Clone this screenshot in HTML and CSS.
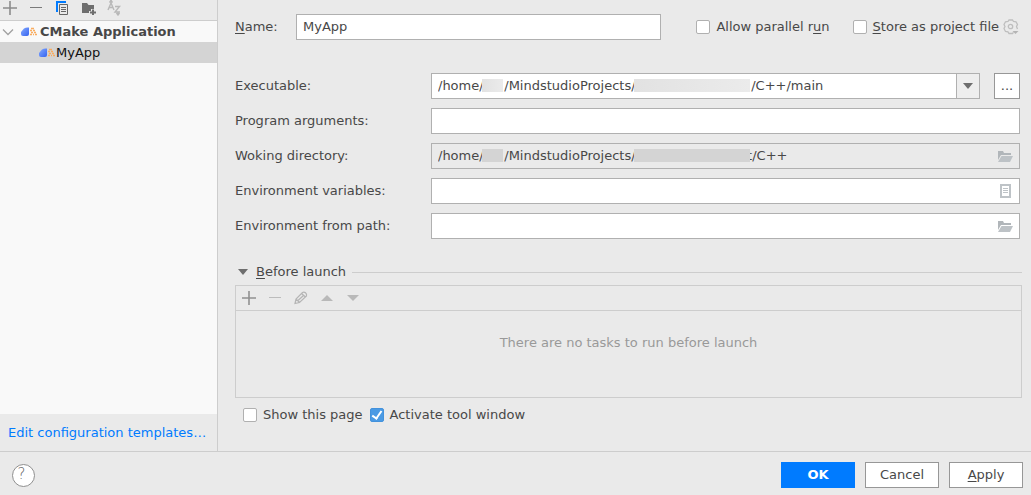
FILE: index.html
```html
<!DOCTYPE html>
<html lang="en">
  <head>
    <meta charset="utf-8">
    <title>Run/Debug Configurations</title>
    <link rel="stylesheet" href="styles.css">
  </head>
  <body>
    <div class="main">
      <aside class="sidebar">
        <div class="toolbar">
          <button class="icon-button" aria-label="Add">
            <svg width="16" height="16"><path d="M1 8h14M8 1v14" stroke="#8c8c8c" stroke-width="1.6" fill="none"/></svg>
          </button>
          <button class="icon-button" aria-label="Remove">
            <svg width="16" height="16"><path d="M2 7.5h12" stroke="#7a7a7a" fill="none"/></svg>
          </button>
          <button class="icon-button" aria-label="Copy">
            <svg width="16" height="16"><path d="M3 12V2h9" stroke="#007bff" stroke-width="2" fill="none"/><path d="M5.5 4.5h8v10h-8z" stroke="#666" fill="none"/><path d="M7 7.5h5M7 9.5h5M7 11.5h5" stroke="#666"/></svg>
          </button>
          <button class="icon-button" aria-label="New folder">
            <svg width="16" height="16"><path d="M2 3h5l1.500 2H14v4h-3v2H9v2H2z" fill="#6e6e6e"/><path d="M13 9.500v5.500M10 12.500h6" stroke="#6e6e6e" stroke-width="2"/></svg>
          </button>
          <button class="icon-button" aria-label="Sort">
            <svg width="16" height="16" fill="none" stroke="#b8b8b8" stroke-width="1.400"><path d="M2 10l3-7 3 7M3 7.500h4M9 6.500h4.500L9 12h5M5 0v3M12 12v3"/><path d="M3.500 2.500L5 .500l1.500 2M10.500 13l1.500 2 1.500-2" fill="#b8b8b8"/></svg>
          </button>
        </div>
        <div class="tree">
          <div class="tree-row group">
            <svg class="chevron" width="12" height="12"><path d="M1 3.500l5 5 5-5" stroke="#a0a0a0" stroke-width="1.300" fill="none"/></svg>
            <svg class="app-icon" width="16" height="12"><use href="#app"/></svg>
            <span>CMake Application</span>
          </div>
          <div class="tree-row child selected">
            <svg class="app-icon" width="16" height="12"><use href="#app"/></svg>
            <span>MyApp</span>
          </div>
        </div>
        <div class="templates"><a href="#">Edit configuration templates…</a></div>
      </aside>

      <main class="content">
        <div class="name-row">
          <label class="name-label" for="name"><u>N</u>ame:</label>
          <input class="text name-input" id="name" type="text" value="MyApp">
          <div class="name-options">
            <label class="check"><input type="checkbox"><span>Allow parallel r<u>u</u>n</span></label>
            <div class="store">
              <label class="check"><input type="checkbox"><span><u>S</u>tore as project file</span></label>
              <button class="icon-button" aria-label="Storage options">
                <svg width="16" height="16" fill="none" stroke="#bebebe" stroke-width="1.300"><path d="M10.500 13.300L9.500 14.500H6L5 12.800l-2.500-.3L1 9.500 2 7.500l-1-2 1.500-2.700L5 2.500 6 1h3.500l1 1.500 2.500.3 1.500 2.700-1 2 1 2.500"/><circle cx="7.500" cy="7.500" r="2.200"/><path d="M9.500 12h6l-3 3z" fill="#b4b4b4" stroke="none"/></svg>
              </button>
            </div>
          </div>
        </div>

        <div class="form">
          <div class="row">
            <label for="executable">Executable:</label>
            <div class="combo-row">
              <div class="combo field">
                <input class="text" id="executable" type="text" role="combobox" aria-expanded="false" value="/home/     /MindstudioProjects/                            /C++/main">
                <button class="combo-arrow" aria-label="Show list"><svg width="10" height="6"><path d="M0 0h10L5 6z" fill="#6e6e6e"/></svg></button>
                <span class="mask mask-user"></span>
                <span class="mask mask-project"></span>
              </div>
              <button class="browse" aria-label="Browse">...</button>
            </div>
          </div>
          <div class="row">
            <label for="arguments">Program arguments:</label>
            <div class="field"><input class="text" id="arguments" type="text"></div>
          </div>
          <div class="row">
            <label for="directory">Woking directory:</label>
            <div class="field muted">
              <input class="text" id="directory" type="text" readonly value="/home/     /MindstudioProjects/                           t/C++">
              <span class="mask mask-user"></span>
              <span class="mask mask-project"></span>
              <button class="icon-button field-icon" aria-label="Choose directory"><svg width="16" height="16"><use href="#folder"/></svg></button>
            </div>
          </div>
          <div class="row">
            <label for="variables">Environment variables:</label>
            <div class="field">
              <input class="text" id="variables" type="text">
              <button class="icon-button field-icon" aria-label="Edit variables"><svg width="16" height="16" fill="none" stroke="#bec3c7"><path d="M4 2h9v12H4z" stroke-width="2"/><path d="M6 5.500h5M6 7.500h5M6 9.500h5"/></svg></button>
            </div>
          </div>
          <div class="row">
            <label for="envpath">Environment from path:</label>
            <div class="field">
              <input class="text" id="envpath" type="text">
              <button class="icon-button field-icon" aria-label="Choose file"><svg width="16" height="16"><use href="#folder"/></svg></button>
            </div>
          </div>
        </div>

        <section class="before">
          <h2 class="before-title">
            <svg width="10" height="6"><path d="M0 0h10L5 6z" fill="#6e6e6e"/></svg>
            <span><u>B</u>efore launch</span>
          </h2>
          <div class="tasks">
            <div class="task-toolbar">
              <button class="icon-button" aria-label="Add task"><svg width="16" height="16"><path d="M1 8h14M8 1v14" stroke="#919191" stroke-width="1.600"/></svg></button>
              <button class="icon-button" aria-label="Remove task" disabled><svg width="16" height="16"><path d="M2 7.500h12" stroke="#bcbcbc"/></svg></button>
              <button class="icon-button" aria-label="Edit task" disabled><svg width="16" height="16" fill="none" stroke="#b5b5b5" stroke-width="1.200"><path d="M2 13.500l1-4.500L9.500 2.500q1.500-1 3 .300t1 3.200L6.500 12.500zM3 9l3.500 3.500M8.500 3.500l4 3.500M5 10.500l5.500-5"/></svg></button>
              <button class="icon-button" aria-label="Move up" disabled><svg width="16" height="16"><path d="M2 11h12L8 5z" fill="#b9b9b9"/></svg></button>
              <button class="icon-button" aria-label="Move down" disabled><svg width="16" height="16"><path d="M2 5h12l-6 6z" fill="#b9b9b9"/></svg></button>
            </div>
            <p class="empty">There are no tasks to run before launch</p>
          </div>
          <div class="after-options">
            <label class="check"><input type="checkbox"><span>Show this page</span></label>
            <label class="check"><input type="checkbox" checked><span>Activate tool window</span></label>
          </div>
        </section>
      </main>
    </div>

    <footer class="footer">
      <button class="help" aria-label="Help">?</button>
      <div class="actions">
        <button class="button primary">OK</button>
        <button class="button">Cancel</button>
        <button class="button"><u>A</u>pply</button>
      </div>
    </footer>

    <!-- shared icons -->
    <svg class="defs" width="0" height="0">
      <defs>
        <linearGradient id="blue" x1="0" y1="0" x2="1" y2="1">
          <stop offset="0" stop-color="#86abff"/>
          <stop offset="1" stop-color="#3563f0"/>
        </linearGradient>
        <g id="app">
          <path d="M3 2.500Q5 1 8 1.500V8q0 2-2 2H2Q0 10 0 8V6z" fill="url(#blue)"/>
          <path d="M10 2.500h3M9 4.500h2M12 4.500h2M10 6.500h2M13 6.500h2M9 8.500h2M12 8.500h1M14 8.500h2" stroke="#f9ad60" stroke-width="1.300"/>
        </g>
        <g id="folder">
          <path d="M1 3h5l1 2h7v2H4l-3 5z" fill="#b1b6ba"/>
          <path d="M4.500 8H16l-3 6H1z" fill="#bdc2c6"/>
        </g>
      </defs>
    </svg>
  </body>
</html>
```
FILE: styles.css
```css
* {
  box-sizing: border-box;
}

body {
  font-family: "DejaVu Sans", sans-serif;
  font-size: 13px;
  line-height: 16px;
  color: #484848;
  background: #eaeaea;
  margin: 0;
  min-height: 100vh;
  display: flex;
  flex-direction: column;
}

button, input {
  font: inherit;
  color: inherit;
  margin: 0;
}

u {
  text-underline-offset: 2px;
}

svg {
  display: block;
  flex: none;
}

.defs {
  position: absolute;
}

.main {
  flex: 1;
  display: flex;
}

.icon-button {
  flex: none;
  width: 16px;
  height: 16px;
  padding: 0;
  border: 0;
  background: none;
}

/* Left side */
.sidebar {
  flex: none;
  width: 218px;
  display: flex;
  flex-direction: column;
  border-right: 1px solid #cdcdcd;
}

.toolbar {
  display: flex;
  gap: 10px;
  padding: 0 2px 4px;
  border-bottom: 1px solid #cdcdcd;
}

.tree {
  flex: 1;
  background: #f9f9f9;
}

.tree-row {
  display: flex;
  align-items: center;
  height: 21px;
  padding-left: 2px;
}

.tree-row.group {
  font-weight: bold;
}

.tree-row.child {
  padding-left: 39px;
}

.tree-row.selected {
  background: #d4d4d4;
  color: #111;
}

.chevron {
  margin-right: 7px;
}

.app-icon {
  margin-right: 1px;
}

.group .app-icon {
  margin-right: 3px;
}

.templates {
  padding: 11px 8px 10px;
}

.templates a {
  color: #007bff;
  text-decoration: none;
}

/* Right side */
.content {
  flex: 1;
  min-width: 0;
  padding: 14px 9px 0 17px;
}

.name-row {
  display: flex;
  align-items: center;
  padding-right: 3px;
  margin-bottom: 33px;
}

.name-label {
  width: 61px;
}

.text {
  flex: 1;
  min-width: 0;
  height: 26px;
  padding: 0 6px 2px;
  border: 1px solid #b0b0b0;
  background: #fff;
}

.name-options {
  display: flex;
  gap: 23px;
  margin-left: 35px;
}

.store {
  display: flex;
  align-items: center;
  gap: 4px;
}

.check {
  display: flex;
  align-items: center;
  gap: 6px;
}

.check input {
  appearance: none;
  width: 14px;
  height: 14px;
  border: 1px solid #b0b0b0;
  border-radius: 2px;
  background: #fff;
}

.check input:checked {
  border-color: #4392dc;
  background: #4a9ae4;
}

.check input:checked::before {
  content: "";
  display: block;
  box-sizing: border-box;
  width: 6px;
  height: 10px;
  margin-left: 3px;
  border: solid #fff;
  border-width: 0 2px 2px 0;
  transform: rotate(35deg);
}

.form {
  display: grid;
  gap: 9px;
  padding-right: 2px;
}

.row {
  display: grid;
  grid-template-columns: 196px 1fr;
  align-items: center;
}

.field {
  flex: 1;
  position: relative;
  display: flex;
}

.muted .text {
  background: #eaeaea;
}

.field-icon {
  position: absolute;
  right: 7px;
  top: 5px;
}

.combo-row {
  display: flex;
  gap: 14px;
}

.combo-arrow {
  width: 23px;
  display: flex;
  align-items: center;
  justify-content: center;
  padding: 0;
  border: 1px solid #b0b0b0;
  border-left: 0;
  background: #eee;
}

.browse {
  width: 26px;
  padding: 0;
  border: 1px solid #979797;
  background: #fff;
}

/* Covers for the private parts of a path */
.mask {
  position: absolute;
  top: 6px;
  height: 13px;
  background: linear-gradient(90deg, #e2e2e2, #ebebeb);
}

.muted .mask {
  background: #d4d4d4;
}

.mask-user {
  left: 51px;
  width: 21px;
}

.mask-project {
  left: 203px;
  width: 116px;
}

.before {
  margin-top: 25px;
}

.before-title {
  display: flex;
  align-items: center;
  margin: 0 0 5px 3px;
  font-size: 13px;
  font-weight: normal;
}

.before-title svg {
  margin-right: 8px;
}

.before-title::after {
  content: "";
  flex: 1;
  margin-left: 6px;
  border-top: 1px solid #cdcdcd;
}

.tasks {
  border: 1px solid #cdcdcd;
  height: 113px;
}

.task-toolbar {
  display: flex;
  gap: 10px;
  padding: 4px 5px;
  border-bottom: 1px solid #cdcdcd;
}

.empty {
  margin: 24px 0 0;
  text-align: center;
  color: #999;
}

.after-options {
  display: flex;
  gap: 7px;
  padding: 9px 8px;
}

/* Bottom bar */
.footer {
  display: flex;
  align-items: center;
  justify-content: space-between;
  padding: 10px 8px 7px 12px;
  border-top: 1px solid #cdcdcd;
}

.help {
  width: 23px;
  height: 23px;
  padding: 0 4px 2px 0;
  border: 1px solid #8f8f8f;
  border-radius: 50%;
  background: #fff;
  font-size: 15px;
  font-weight: 200;
  color: #666;
}

.actions {
  display: flex;
  gap: 10px;
}

.button {
  width: 74px;
  height: 26px;
  padding: 0;
  border: 1px solid #979797;
  background: #fff;
}

.button.primary {
  border-color: #007bff;
  background: #007bff;
  color: #fff;
  font-weight: bold;
}
```
